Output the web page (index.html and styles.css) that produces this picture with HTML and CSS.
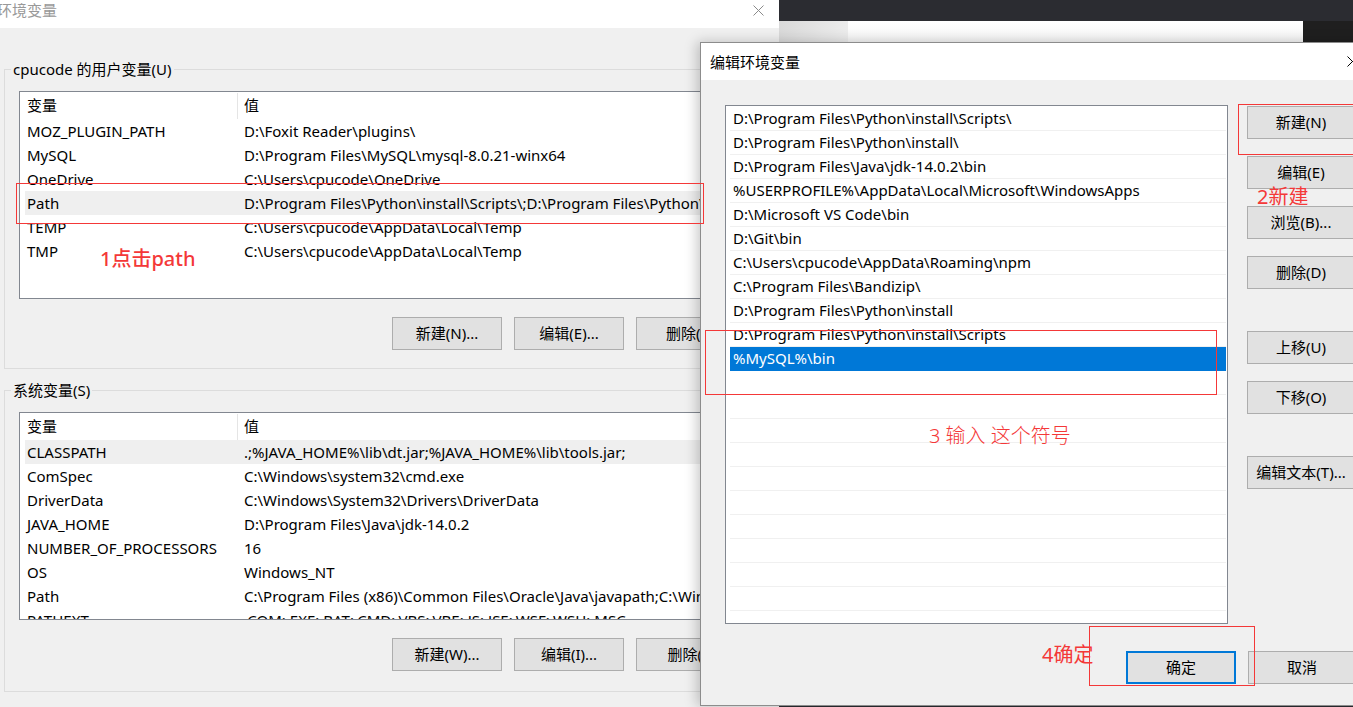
FILE: index.html
```html
<!DOCTYPE html>
<html>
    <head>
        <meta charset="utf-8">
        <title>编辑环境变量</title>
        <link rel="stylesheet" href="styles.css">
    </head>
    <body>
        <div class="backdrop">
            <div class="bd-grey"></div>
            <div class="bd-white"></div>
            <div class="bd-dark"></div>
        </div>

        <!-- 环境变量 窗口 -->
        <div class="win env">
            <div class="titlebar inactive">
                <span class="title">环境变量</span>
                <span class="close"><svg width="11" height="11" viewBox="0 0 11 11"><path d="M0.5 0.5L10.5 10.5M10.5 0.5L0.5 10.5" stroke="#8a8a8a" stroke-width="1"/></svg></span>
            </div>
            <div class="env-body">
                <div class="group user">
                    <div class="group-title">cpucode 的用户变量(U)</div>
                    <div class="listview">
                        <div class="lv-head"><div class="c1">变量</div><div class="c2">值</div></div>
                        <div class="lv-row"><div class="c1">MOZ_PLUGIN_PATH</div><div class="c2">D:\Foxit Reader\plugins\</div></div>
                        <div class="lv-row"><div class="c1">MySQL</div><div class="c2">D:\Program Files\MySQL\mysql-8.0.21-winx64</div></div>
                        <div class="lv-row"><div class="c1">OneDrive</div><div class="c2">C:\Users\cpucode\OneDrive</div></div>
                        <div class="lv-row sel"><div class="c1">Path</div><div class="c2">D:\Program Files\Python\install\Scripts\;D:\Program Files\Python\install\;D:\Program Files\Java</div></div>
                        <div class="lv-row"><div class="c1">TEMP</div><div class="c2">C:\Users\cpucode\AppData\Local\Temp</div></div>
                        <div class="lv-row"><div class="c1">TMP</div><div class="c2">C:\Users\cpucode\AppData\Local\Temp</div></div>
                    </div>
                    <div class="btn-row">
                        <div class="btn">新建(N)...</div>
                        <div class="btn">编辑(E)...</div>
                        <div class="btn">删除(D)</div>
                    </div>
                </div>
                <div class="group system">
                    <div class="group-title">系统变量(S)</div>
                    <div class="listview">
                        <div class="lv-head"><div class="c1">变量</div><div class="c2">值</div></div>
                        <div class="lv-row sel"><div class="c1">CLASSPATH</div><div class="c2">.;%JAVA_HOME%\lib\dt.jar;%JAVA_HOME%\lib\tools.jar;</div></div>
                        <div class="lv-row"><div class="c1">ComSpec</div><div class="c2">C:\Windows\system32\cmd.exe</div></div>
                        <div class="lv-row"><div class="c1">DriverData</div><div class="c2">C:\Windows\System32\Drivers\DriverData</div></div>
                        <div class="lv-row"><div class="c1">JAVA_HOME</div><div class="c2">D:\Program Files\Java\jdk-14.0.2</div></div>
                        <div class="lv-row"><div class="c1">NUMBER_OF_PROCESSORS</div><div class="c2">16</div></div>
                        <div class="lv-row"><div class="c1">OS</div><div class="c2">Windows_NT</div></div>
                        <div class="lv-row"><div class="c1">Path</div><div class="c2">C:\Program Files (x86)\Common Files\Oracle\Java\javapath;C:\Windows\system32</div></div>
                        <div class="lv-row"><div class="c1">PATHEXT</div><div class="c2">.COM;.EXE;.BAT;.CMD;.VBS;.VBE;.JS;.JSE;.WSF;.WSH;.MSC</div></div>
                    </div>
                    <div class="btn-row">
                        <div class="btn">新建(W)...</div>
                        <div class="btn">编辑(I)...</div>
                        <div class="btn">删除(L)</div>
                    </div>
                </div>
            </div>
        </div>

        <!-- 编辑环境变量 对话框 -->
        <div class="win edit">
            <div class="titlebar">
                <span class="title">编辑环境变量</span>
                <span class="close"><svg width="11" height="11" viewBox="0 0 11 11"><path d="M0.5 0.5L10.5 10.5M10.5 0.5L0.5 10.5" stroke="#000" stroke-width="1"/></svg></span>
            </div>
            <div class="edit-body">
                <div class="edit-main">
                    <div class="pathlist">
                        <div class="pl-row">D:\Program Files\Python\install\Scripts\</div>
                        <div class="pl-row">D:\Program Files\Python\install\</div>
                        <div class="pl-row">D:\Program Files\Java\jdk-14.0.2\bin</div>
                        <div class="pl-row">%USERPROFILE%\AppData\Local\Microsoft\WindowsApps</div>
                        <div class="pl-row">D:\Microsoft VS Code\bin</div>
                        <div class="pl-row">D:\Git\bin</div>
                        <div class="pl-row">C:\Users\cpucode\AppData\Roaming\npm</div>
                        <div class="pl-row">C:\Program Files\Bandizip\</div>
                        <div class="pl-row">D:\Program Files\Python\install</div>
                        <div class="pl-row">D:\Program Files\Python\install\Scripts</div>
                        <div class="pl-row sel">%MySQL%\bin</div>
                        <div class="pl-row"></div>
                        <div class="pl-row"></div>
                        <div class="pl-row"></div>
                        <div class="pl-row"></div>
                        <div class="pl-row"></div>
                        <div class="pl-row"></div>
                        <div class="pl-row"></div>
                        <div class="pl-row"></div>
                        <div class="pl-row"></div>
                        <div class="pl-row"></div>
                    </div>
                    <div class="side-btns">
                        <div class="btn">新建(N)</div>
                        <div class="btn">编辑(E)</div>
                        <div class="btn">浏览(B)...</div>
                        <div class="btn gap">删除(D)</div>
                        <div class="btn">上移(U)</div>
                        <div class="btn gap">下移(O)</div>
                        <div class="btn">编辑文本(T)...</div>
                    </div>
                </div>
                <div class="foot-btns">
                    <div class="btn ok">确定</div>
                    <div class="btn cancel">取消</div>
                </div>
            </div>
        </div>

        <!-- 标注 -->
        <div class="mark m1"></div>
        <div class="note n1">1点击path</div>
        <div class="mark m2"></div>
        <div class="note n2">2新建</div>
        <div class="mark m3"></div>
        <div class="note n3">3 输入 这个符号</div>
        <div class="mark m4"></div>
        <div class="note n4">4确定</div>
    </body>
</html>
```

FILE: styles.css
```css
* {margin: 0px;padding: 0px;box-sizing: border-box;}
body {width: 1353px;height: 707px;overflow: hidden;position: relative;background-color: #2b2c31;font-family: "Noto Sans", "Noto Sans CJK SC", sans-serif;font-size: 15px;color: #000;}

.backdrop {position: absolute;left: 779px;top: 21px;right: 0;height: 22px;display: flex;}
.bd-grey {width: 69px;background: linear-gradient(to right, #d9d9d9, #ececec);}
.bd-white {width: 455px;background: linear-gradient(to bottom, #fff, #f4f4f4);}
.bd-dark {flex: 1;background-color: #1f1f1f;}

.win {position: absolute;background-color: #f0f0f0;}
.titlebar {background-color: #fff;display: flex;justify-content: space-between;align-items: center;}
.titlebar .close {width: 46px;display: flex;justify-content: center;align-items: center;}
.titlebar .close svg {display: block;}

/* 环境变量 */
.env {left: 0;top: 0;width: 779px;height: 707px;}
.env .titlebar {height: 28px;align-items: flex-start;}
.env .title {color: #999;line-height: 20px;margin-left: -3px;}
.env .close {height: 20px;width: 42px;}
.env-body {padding: 41px 7px 0 4px;}
.group {position: relative;border: 1px solid #dcdcdc;padding: 21px 14px 0;}
.group.user {height: 300px;}
.group.system {height: 302px;margin-top: 21px;}
.group-title {position: absolute;left: 6px;top: -11px;background-color: #f0f0f0;padding: 0 2px;line-height: 20px;}
.listview {height: 208px;border: 1px solid #828790;background-color: #fff;overflow: hidden;}
.lv-head {display: flex;height: 27px;line-height: 27px;}
.lv-head .c1 {width: 218px;padding-left: 7px;border-right: 1px solid #e5e5e5;margin: 1px 0 0;line-height: 25px;}
.lv-head .c2 {padding-left: 6px;}
.lv-row {display: flex;height: 24px;line-height: 24px;margin-left: 5px;white-space: nowrap;}
.lv-row .c1 {width: 212px;padding-left: 2px;flex-shrink: 0;}
.lv-row .c2 {padding-left: 7px;}
.lv-row.sel {background-color: #efefef;}

.btn {height: 33px;line-height: 31px;text-align: center;background-color: #e1e1e1;border: 1px solid #adadad;white-space: nowrap;overflow: hidden;}
.btn-row {display: flex;justify-content: flex-end;gap: 12px;padding-right: 11px;margin-top: 18px;}
.btn-row .btn {width: 110px;}

/* 编辑环境变量 */
.edit {left: 700px;top: 42px;width: 676px;height: 664px;border: 1px solid #8c8c8c;box-shadow: -3px 0 12px rgba(0, 0, 0, 0.22);}
.edit .titlebar {height: 37px;}
.edit .title {padding-left: 9px;}
.edit .close {height: 37px;}
.edit-body {padding: 25px 0 0 24px;}
.edit-main {display: flex;}
.pathlist {width: 503px;height: 519px;border: 1px solid #828790;background-color: #fff;padding: 1px 1px 0 4px;overflow: hidden;}
.pl-row {height: 24px;line-height: 23px;border-bottom: 1px solid #f0f0f0;padding-left: 3px;white-space: nowrap;}
.pl-row.sel {background-color: #0078d7;color: #fff;border-bottom-color: #0078d7;}
.side-btns {margin-left: 19px;width: 108px;padding-top: 1px;display: flex;flex-direction: column;gap: 17px;}
.side-btns .gap {margin-bottom: 25px;}
.foot-btns {display: flex;justify-content: flex-end;gap: 12px;margin-top: 27px;width: 631px;}
.foot-btns .ok {width: 110px;border: 2px solid #0078d7;line-height: 29px;}
.foot-btns .cancel {width: 108px;}

/* 标注 */
.mark {position: absolute;border: 1px solid #f43838;}
.m1 {left: 16px;top: 183px;width: 688px;height: 41px;}
.m2 {left: 705px;top: 330px;width: 512px;height: 65px;}
.m3 {left: 1238px;top: 104px;width: 130px;height: 51px;}
.m4 {left: 1089px;top: 626px;width: 166px;height: 60px;}
.note {position: absolute;color: #f43838;font-size: 20px;line-height: 24px;white-space: nowrap;}
.n1 {left: 100px;top: 247px;font-weight: 500;}
.n2 {left: 1257px;top: 185px;}
.n3 {left: 929px;top: 424px;font-weight: 300;}
.n4 {left: 1042px;top: 643px;}
```
